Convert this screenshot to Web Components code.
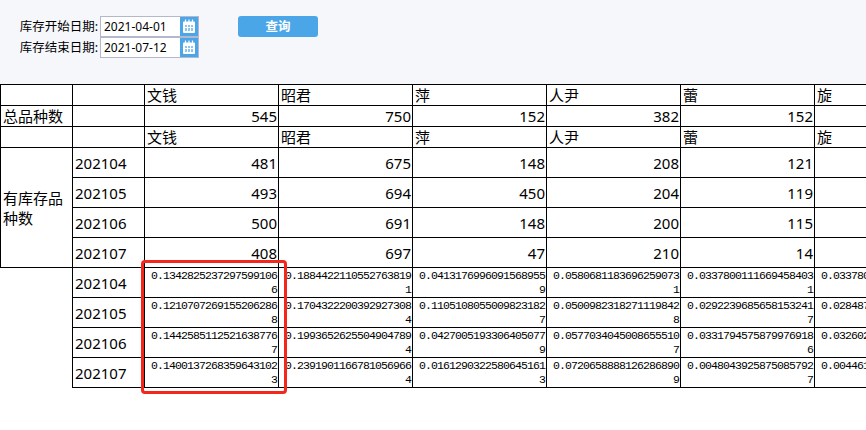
<!DOCTYPE html>
<html lang="zh">
<head>
<meta charset="utf-8">
<title>库存</title>
<style>
  html, body { margin: 0; padding: 0; overflow: hidden; background: #fff; }
  body { font-family: "Noto Sans", "Noto Sans CJK SC", sans-serif; }
</style>
</head>
<body>
<stock-page>
  <stock-filter slot="filter">
    <date-field slot="dates" label="库存开始日期:" value="2021-04-01"></date-field>
    <date-field slot="dates" label="库存结束日期:" value="2021-07-12"></date-field>
    <query-button slot="action">查询</query-button>
  </stock-filter>
  <stock-table slot="table"></stock-table>
</stock-page>

<script>
class StockPage extends HTMLElement {
  constructor() {
    super();
    this.attachShadow({ mode: "open" });
  }
  connectedCallback() {
    this.shadowRoot.innerHTML = `
      <style>
        :host { display: block; width: 866px; height: 430px; overflow: hidden; }
      </style>
      <slot name="filter"></slot>
      <slot name="table"></slot>
    `;
  }
}

class StockFilter extends HTMLElement {
  constructor() {
    super();
    this.attachShadow({ mode: "open" });
  }
  connectedCallback() {
    this.shadowRoot.innerHTML = `
      <style>
        :host { display: flex; align-items: flex-start; height: 68px; padding-top: 16px; background: #f6f7fb; }
        .dates { display: flex; flex-direction: column; width: 199px; }
        .action { margin-left: 39px; }
      </style>
      <div class="dates"><slot name="dates"></slot></div>
      <div class="action"><slot name="action"></slot></div>
    `;
  }
}

class DateField extends HTMLElement {
  constructor() {
    super();
    this.attachShadow({ mode: "open" });
  }
  connectedCallback() {
    const label = this.getAttribute("label");
    const value = this.getAttribute("value");
    this.shadowRoot.innerHTML = `
      <style>
        :host { display: flex; height: 21px; align-items: stretch; }
        .label { width: 100px; box-sizing: border-box; padding-right: 2px; text-align: right; font-size: 12.5px; line-height: 21px; color: #000; white-space: nowrap; }
        .box { flex: 1; display: flex; border: 1px solid #b4b8cc; background: #fff; }
        .value { flex: 1; padding-left: 3px; font-size: 12px; line-height: 19px; color: #000; }
        .icon { width: 18px; background: #4ba6e8; display: flex; align-items: center; justify-content: center; }
        svg { display: block; }
      </style>
      <span class="label">${label}</span>
      <div class="box">
        <span class="value">${value}</span>
        <span class="icon">
          <svg width="14" height="15" viewBox="0 0 14 15">
            <rect x="1" y="2.5" width="12" height="11.5" rx="1" fill="#fff"/>
            <path d="M3.5 .5v3M7 .5v3M10.5 .5v3" stroke="#fff" stroke-width="1.2"/>
            <path d="M3 6h2v2h-2zM6 6h2v2h-2zM9 6h2v2h-2zM3 9h2v3h-2zM6 9h2v3h-2zM9 9h2v3h-2z" fill="#8cc6f0"/>
          </svg>
        </span>
      </div>
    `;
  }
}

class QueryButton extends HTMLElement {
  constructor() {
    super();
    this.attachShadow({ mode: "open" });
  }
  connectedCallback() {
    this.shadowRoot.innerHTML = `
      <style>
        :host { display: block; width: 80px; height: 21px; border-radius: 3px; background: #4ba6e8; color: #fff; text-align: center; font-size: 12.5px; font-weight: 700; line-height: 21px; cursor: pointer; }
      </style>
      <slot></slot>
    `;
  }
}

class StockTable extends HTMLElement {
  constructor() {
    super();
    this.attachShadow({ mode: "open" });
  }
  connectedCallback() {
    const names = ["文钱", "昭君", "萍", "人尹", "蕾", "旋"];
    const months = ["202104", "202105", "202106", "202107"];
    const totals = ["545", "750", "152", "382", "152", ""];
    const counts = [
      ["481", "675", "148", "208", "121", ""],
      ["493", "694", "450", "204", "119", ""],
      ["500", "691", "148", "200", "115", ""],
      ["408", "697", "47", "210", "14", ""],
    ];
    const ratios = [
      ["0.13428252372975991066", "0.18844221105527638191", "0.04131769960915689559", "0.05806811836962590731", "0.03378001116694584031", "0.03378001116694584031"],
      ["0.12107072691552062868", "0.17043222003929273084", "0.11051080550098231827", "0.05009823182711198428", "0.02922396856581532417", "0.02848722986247544204"],
      ["0.14425851125216387767", "0.19936526255049047894", "0.04270051933064050779", "0.05770340450086555107", "0.03317945758799769186", "0.03260242354298903635"],
      ["0.14001372683596431023", "0.23919011667810569664", "0.01612903225806451613", "0.07206588881262868909", "0.00480439258750857927", "0.00446122168840082361"],
    ];

    const nameCells = names.map(n => `<td class="name">${n}</td>`).join("");
    const numCells = list => list.map(n => `<td class="num">${n}</td>`).join("");

    const countRows = counts.map((row, i) => `
      <tr class="tall">
        ${i === 0 ? `<td class="group" rowspan="4">有库存品种数</td>` : ""}
        <td class="month">${months[i]}</td>${numCells(row)}
      </tr>`).join("");

    const ratioRows = ratios.map((row, i) => `
      <tr class="tall">
        ${i === 0 ? `<td class="blank" rowspan="4"></td>` : ""}
        <td class="month">${months[i]}</td>
        ${row.map(n => `<td class="ratio">${n}</td>`).join("")}
      </tr>`).join("");

    this.shadowRoot.innerHTML = `
      <style>
        :host { display: block; position: relative; width: 948px; color: #000; font-size: 15px; }
        table { border-collapse: collapse; table-layout: fixed; width: 948px; }
        td { border: 1px solid #000; padding: 0; height: 20px; line-height: 20px; overflow: hidden; }
        tr.tall td { height: 29px; }
        .head { padding-left: 2px; text-align: left; }
        .name { padding-left: 2px; text-align: left; }
        .num { padding-right: 1px; text-align: right; }
        .month { padding-left: 2px; }
        .group { padding-left: 2px; }
        .blank { border-left: 0; border-bottom: 0; }
        tr.tall td.ratio {
          box-sizing: border-box;
          height: 29px;
          padding: 1px 1px 0 5px;
          text-align: right;
          font-family: "Liberation Mono", monospace;
          font-size: 11.5px;
          letter-spacing: -.9px;
          line-height: 14px;
          word-break: break-all;
          vertical-align: top;
        }
        .mark { position: absolute; left: 141px; top: 176px; width: 140px; height: 128px; border: 3px solid #f5261b; border-radius: 4px; }
      </style>
      <table>
        <colgroup>
          <col style="width:72px"><col style="width:72px">
          ${names.map(() => `<col style="width:134px">`).join("")}
        </colgroup>
        <tr><td></td><td></td>${nameCells}</tr>
        <tr><td class="head">总品种数</td><td></td>${numCells(totals)}</tr>
        <tr><td></td><td></td>${nameCells}</tr>
        ${countRows}
        ${ratioRows}
      </table>
      <div class="mark"></div>
    `;
  }
}

window.customElements.define("stock-page", StockPage);
window.customElements.define("stock-filter", StockFilter);
window.customElements.define("date-field", DateField);
window.customElements.define("query-button", QueryButton);
window.customElements.define("stock-table", StockTable);
</script>
</body>
</html>
